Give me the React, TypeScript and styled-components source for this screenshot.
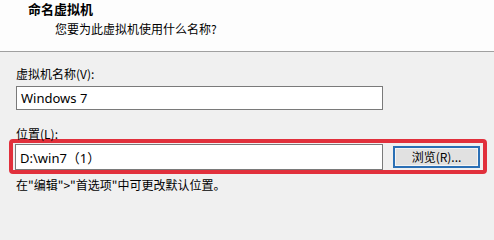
import React from "react";
import styled, { createGlobalStyle } from "styled-components";

const GlobalStyle = createGlobalStyle`
  html, body {
    margin: 0;
    padding: 0;
    background: #f0f0f0;
  }
  body {
    font-family: "Noto Sans", "Noto Sans CJK SC", sans-serif;
    font-size: 12px;
    color: #000;
  }
`;

const Dialog = styled.div`
  width: 494px;
  height: 221px;
  overflow: hidden;
  background: #f0f0f0;
`;
const Header = styled.div`
  height: 52px;
  box-sizing: border-box;
  background: #fdfdfd;
  border-bottom: 1px solid #a0a0a0;
  padding: 0 0 0 28px;
`;
const Title = styled.div`
  font-family: "Noto Sans CJK SC", sans-serif;
  font-weight: 700;
  font-size: 13px;
  line-height: 18px;
`;
const SubTitle = styled.div`
  font-family: "Noto Sans CJK SC", sans-serif;
  font-size: 12px;
  line-height: 18px;
  margin: 2px 0 0 27px;
`;
const Body = styled.div`
  padding: 13px 0 0 16px;
`;
const Label = styled.div<{ $top?: number }>`
  font-family: "Noto Sans CJK SC", sans-serif;
  font-size: 12px;
  line-height: 18px;
  margin-top: ${(p) => p.$top ?? 0}px;
`;
const TextBox = styled.div<{ $h: number; $w: number }>`
  width: ${(p) => p.$w}px;
  height: ${(p) => p.$h}px;
  box-sizing: border-box;
  background: #fff;
  border: 1px solid #7a7a7a;
  display: flex;
  align-items: center;
  padding-left: 4px;
  font-family: "Noto Sans", "Noto Sans CJK SC", sans-serif;
  font-size: 13px;
`;
const Highlight = styled.div`
  width: 478px;
  box-sizing: border-box;
  margin: -4px 0 0 -7px;
  border: 4px solid #e1303c;
  border-radius: 4px;
  padding: 1px 3px 0 2px;
  display: flex;
  align-items: center;
`;
const BrowseButton = styled.button`
  margin-left: 10px;
  width: 87px;
  height: 22px;
  box-sizing: border-box;
  border: 2px solid #2a6fb5;
  background: #e1e1e1;
  box-shadow: inset 0 0 0 1px #f4f4f4;
  padding: 0 0 1px;
  font-family: "Noto Sans CJK SC", sans-serif;
  font-size: 12px;
  color: #000;
`;
const Hint = styled.div`
  font-family: "Noto Sans CJK SC", sans-serif;
  font-size: 12px;
  line-height: 18px;
  margin-top: 2px;
`;

export default () => {
  return (
    <>
      <GlobalStyle />
      <Dialog>
        <Header>
          <Title>命名虚拟机</Title>
          <SubTitle>您要为此虚拟机使用什么名称?</SubTitle>
        </Header>
        <Body>
          <Label>虚拟机名称(V):</Label>
          <TextBox $w={367} $h={24} style={{ marginTop: 3 }}>
            Windows 7
          </TextBox>
          <Label $top={15}>位置(L):</Label>
          <Highlight>
            <TextBox $w={368} $h={26}>D:\win7（1）</TextBox>
            <BrowseButton>浏览(R)...</BrowseButton>
          </Highlight>
          <Hint>在"编辑"&gt;"首选项"中可更改默认位置。</Hint>
        </Body>
      </Dialog>
    </>
  );
};
